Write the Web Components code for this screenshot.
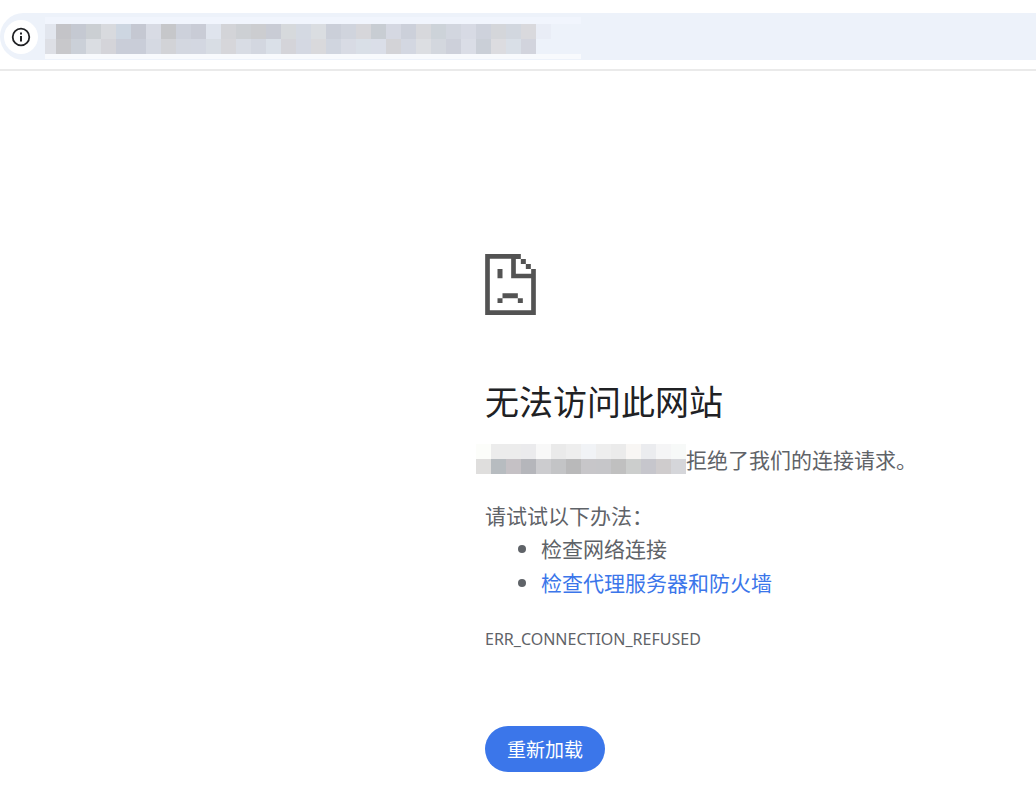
<!DOCTYPE html>
<html lang="zh-CN">
<head>
<meta charset="utf-8">
<title>无法访问此网站</title>
<style>
body{margin:0;background:#fff;color:#5f6368;font-family:"Noto Sans CJK SC","Noto Sans",sans-serif}
</style>
</head>
<body>
<error-page></error-page>
<script>
const define = (name, html, setup) => {
  const template = document.createElement('template');
  template.innerHTML = html;
  customElements.define(name, class extends HTMLElement {
    connectedCallback() {
      if (this.shadowRoot) return;
      this.attachShadow({ mode: 'open' }).append(template.content.cloneNode(true));
      if (setup) setup(this);
    }
  });
};

// Colour cells hiding a private address. "first" is the width of the clipped leading cell.
define('pixel-mask', `
<style>:host{display:block;flex:none}svg{display:block}</style>
<svg aria-hidden="true" shape-rendering="crispEdges"></svg>`, host => {
  const size = 15, first = Number(host.getAttribute('first') || size);
  const rows = host.getAttribute('cells').split('|').map(r => r.trim().split(/\s+/));
  const svg = host.shadowRoot.querySelector('svg');
  const count = Math.max(...rows.map(r => r.length));
  svg.setAttribute('width', first + (count - 1) * size);
  svg.setAttribute('height', rows.length * size);
  svg.innerHTML = rows.map((row, y) => row.map((c, i) =>
    `<rect x="${i ? first + (i - 1) * size : 0}" y="${y * size}" width="${i ? size : first}" height="${size}" fill="#${c}"/>`).join('')).join('');
});

define('address-bar', `
<style>
:host{display:block;padding:13px 0 9px;border-bottom:2px solid #eaeaea}
.bar{display:flex;align-items:center;height:47px;padding-left:4px;background:#edf2fa;border-radius:24px 0 0 24px}
button{flex:none;width:34px;height:34px;margin-right:7px;padding:0;border:0;border-radius:50%;background:#fff;display:grid;place-items:center}
button svg{display:block}
.address{box-sizing:border-box;align-self:flex-end;width:536px;height:42px;margin-bottom:1px;border-top:7px solid #f1f5fd;border-bottom:5px solid #f8fafd}
</style>
<div class="bar">
<button type="button" aria-label="查看网站信息"><svg width="20" height="20" viewBox="0 0 20 20"><circle cx="10" cy="10" r="8.3" fill="none" stroke="#202124" stroke-width="1.8"/><path d="M9 5.5h2v2H9zM9 9h2v5.500H9z" fill="#202124"/></svg></button>
<div class="address"><pixel-mask first="11" cells="e2e6ee c4c4c8 c5c9d2 cbcfd3 d8dade cdd6e1 c5c8d2 d8dbe4 c6c7ca cdd1db c9ccd6 dfe4ed d3d4d8 cdd0d4 cccdd0 c9ccd5 d6d9dc d4d9e2 dadde1 cbcfd9 d0d4dd d6d6da c8cdd3 d5d8e2 ccd0da d7d8dc cdd3d9 d2d6df d7dae4 ced2dc d4d6da d2d7df d9d9dd e9edf6|dddfe5 c8c8cb cbd0d8 dadde2 d4d4d9 c9cdd8 c9cdd8 d5d9e2 d2d3d7 d3d7e0 d3d7e1 d8dde4 d6d6da d8dce4 d3d7e0 dae0e8 d4d4d9 d4d8e2 d9d9dc d0d5df d8dbe4 d9dfe7 dadee8 d3d3d7 d3d7e1 dcdee2 d3d7de cdd0da dadde6 cacfd7 dcdce0 d9dfe7 d2d4dd"></pixel-mask></div>
</div>`);

define('sad-page-icon', `
<style>:host{display:block}svg{display:block}</style>
<svg width="51" height="61" viewBox="0 0 152 183" fill="#535353" aria-hidden="true"><path d="M0 0H107V15H92V59H138V45H152V183H0ZM14 14V169H138V73H78V14Z" fill-rule="evenodd"/><path d="M107 15h15v15h-15zM122 30h15v15h-15zM37 45h15v28H37zM52 118h46v15H52zM37 133h15v14H37zM98 133h15v14H98z"/></svg>`);

define('reload-button', `
<style>
:host{display:block}
button{display:block;height:46px;padding:0 22px;border:0;border-radius:23px;background:#3b76ea;color:#fff;font:inherit;font-size:19px;line-height:46px}
</style>
<button type="button"><slot></slot></button>`);

define('error-page', `
<style>
:host{display:block;font-size:21px;line-height:34px}
main{padding:183px 24px 16px calc(50% - 33px)}
h1{margin:61px 0 0;font-size:34px;line-height:50px;font-weight:400;color:#202124}
p{margin:0}
.summary{display:flex;align-items:center;margin-top:16px}
.summary pixel-mask{margin:0 0 0 -9px}
.intro{margin-top:23px;line-height:32px}
ul{margin:0;padding-left:56px}
a{color:#3b76ea;text-decoration:none}
.code{margin-top:28px;font-family:"Noto Sans",sans-serif;font-size:16px;line-height:24px}
reload-button{margin-top:75px}
</style>
<address-bar></address-bar>
<main>
<sad-page-icon></sad-page-icon>
<h1>无法访问此网站</h1>
<p class="summary"><pixel-mask cells="fcfdfa ececec ececec ebebed f8f8f8 eaeaea eeeeee f1f3f6 eeeeee ebebeb f8f6f4 ebecef f5f5f6 f7f9f8|dfdedd b7bcc0 c5c1c5 b5b6bb cccccf c3c4c6 b9b9ba c7c6c9 c6c6c9 c0c0c0 cccecd c6c6cc cfcccd d5d6da"></pixel-mask><span>拒绝了我们的连接请求。</span></p>
<p class="intro">请试试以下办法：</p>
<ul><li>检查网络连接</li><li><a href="#">检查代理服务器和防火墙</a></li></ul>
<p class="code">ERR_CONNECTION_REFUSED</p>
<reload-button>重新加载</reload-button>
</main>`);
</script>
</body>
</html>
